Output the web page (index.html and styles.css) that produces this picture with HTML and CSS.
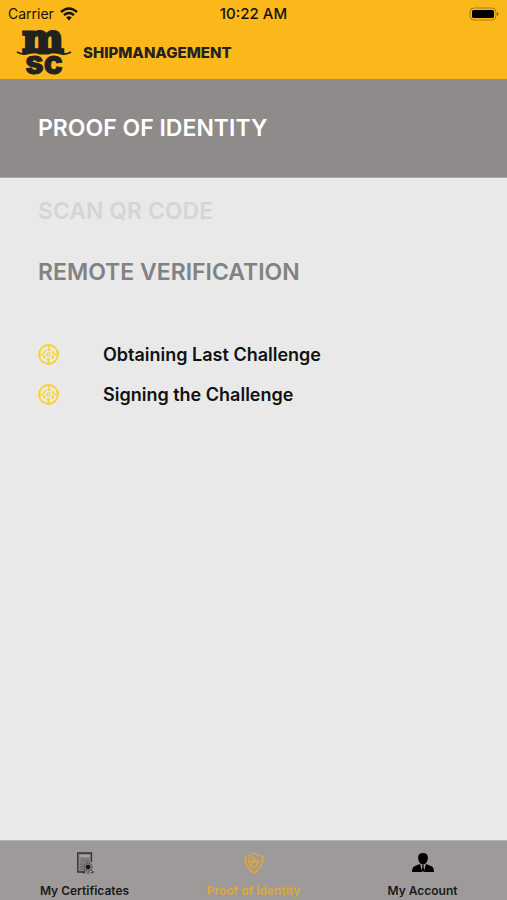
FILE: index.html
```html
<!DOCTYPE html>
<html lang="en">
<head>
<meta charset="utf-8">
<meta name="viewport" content="width=device-width, initial-scale=1">
<title>Proof of Identity</title>
<link rel="stylesheet" href="styles.css">
</head>
<body>
<header class="top">
  <div class="status">
    <div class="carrier"><span>Carrier</span>
      <svg width="18" height="14" viewBox="0 0 18 14" aria-hidden="true"><g fill="none" stroke="#15120a" stroke-width="2.4"><path d="M1 5Q9-2 17 5"/><path d="M4 8.2Q9 4 14 8.2"/></g><path d="M6.2 10.4Q9 8.2 11.8 10.4L9 13.4Z" fill="#15120a"/></svg>
    </div>
    <time class="clock">10:22 AM</time>
    <svg class="battery" width="30" height="14" viewBox="0 0 30 14" aria-hidden="true"><rect x="1" y="1" width="26" height="12" rx="4" fill="none" stroke="#a87c1a"/><rect x="3" y="3" width="22" height="8" rx="1.5" fill="#000"/><path d="M28 5q3 2 0 4z" fill="#80601a"/></svg>
  </div>
  <div class="brand">
    <svg class="logo" width="54" height="48" viewBox="0 0 54 48" role="img" aria-label="MSC">
      <g class="logo-letters" text-anchor="middle"><text class="logo-m" x="26" y="24">m</text><text class="logo-sc" x="27" y="46">sc</text></g>
      <path d="M5 27.500Q10 28 15 26.500Q20 25 27 27Q34 25 39 26.500Q44 28 49 27" fill="none" stroke="#fbb81b" stroke-width="1.500"/>
      <path d="M0 24Q5 27 10 25.500Q15 23.500 20 24.500Q24 26 27 25.500Q30 26 34 24.500Q39 23.500 44 25.500Q49 27 54 24" fill="none" stroke="#222220" stroke-width="2"/>
    </svg>
    <span class="brand-name">SHIPMANAGEMENT</span>
  </div>
</header>
<div class="banner"><h1>PROOF OF IDENTITY</h1></div>
<main>
  <h2 class="inactive">SCAN QR CODE</h2>
  <h2>REMOTE VERIFICATION</h2>
  <ul class="steps">
    <li><svg class="spinner" viewBox="0 0 22 22" aria-hidden="true"><use href="#wheel"/></svg><span>Obtaining Last Challenge</span></li>
    <li><svg class="spinner" viewBox="0 0 22 22" aria-hidden="true"><use href="#wheel"/></svg><span>Signing the Challenge</span></li>
  </ul>
</main>
<nav class="tabs">
  <a href="#certificates">
    <svg width="22" height="22" viewBox="0 0 22 22" aria-hidden="true"><path d="M17.500 10V1H3.700v19H11" fill="#858281" stroke="#333" stroke-width="1.300"/><path d="M5.500 4h10" stroke="#a8a5a4" stroke-width="2"/><path d="M7 7h8v3H7z" fill="#777"/><path d="M6 12h4M6 14.500h3M6 17h4" stroke="#666"/><circle cx="14" cy="15" r="4.200" fill="#777" stroke="#444" stroke-dasharray="1.500 1"/><circle cx="14" cy="15" r="2.200" fill="#111"/><path d="M10.500 18.500l-2 2 3 .5M14 20v2M17.500 18.500l2 1.500-3 1" fill="none" stroke="#333"/></svg>
    <span>My Certificates</span>
  </a>
  <a class="current" href="#identity" aria-current="page">
    <svg width="22" height="22" viewBox="0 0 22 22" aria-hidden="true"><g fill="none" stroke="#dfa83a"><path stroke-width="1.500" d="M11 1Q7 4 2 4.400Q2 15.500 11 21Q20 15.500 20 4.400Q15 4 11 1Z"/><path d="M11 4Q8 6 5 6.500Q5.500 14.500 11 18"/><path stroke-width="1.400" d="M8 8v7M11 5v3M14.500 8q-5-1-5 2q5-1 4.500 3q-2 3-5 1M14 10.500l3-2"/></g></svg>
    <span>Proof of Identity</span>
  </a>
  <a href="#account">
    <svg width="22" height="22" viewBox="0 0 22 22" aria-hidden="true"><path d="M11 1c-3.500 0-5 2.200-4.800 5.200C6.400 9.500 8.500 12.500 11 12.500s4.600-3 4.800-6.300C16 3.200 14.500 1 11 1Z"/><path d="M0 20q0-5 3-6l5-2 2.200 8Zm22 0q0-5-3-6l-5-2-2.200 8Z"/><path d="M10 13h2l-.5 1.500.8 4L11 20l-1.300-1.500.8-4Z"/></svg>
    <span>My Account</span>
  </a>
</nav>
<svg width="0" height="0" class="symbols" aria-hidden="true"><defs><g id="wheel" fill="none" stroke="#fad02c"><circle cx="11" cy="11" r="9.900" stroke-width="2"/><path stroke-width="1.600" d="M11 1v4M11 17V21M1 11h4M17 11H21"/><circle cx="11" cy="11" r="5.200" stroke-width="2" stroke-dasharray="3.400 2.045" stroke-dashoffset="-1"/><circle cx="11" cy="11" r="1.700" stroke-width="1.200"/></g></defs></svg>
</body>
</html>
```
FILE: styles.css
```css
* { box-sizing: border-box; }
body {
  margin: 0;
  min-height: 100vh;
  display: flex;
  flex-direction: column;
  background: #e9e9e9;
  color: #111;
  font-family: Inter, "Liberation Sans", sans-serif;
}
.top {
  background: #fbb81b;
  border-bottom: 1px solid #b48a3c;
  min-height: 80px;
}
.status {
  display: grid;
  grid-template-columns: 1fr auto 1fr;
  align-items: center;
  height: 27px;
  padding: 0 8px;
  font-size: 14px;
  color: #15120a;
}
.carrier { display: flex; align-items: center; gap: 6px; }
.clock { font-size: 15px; font-weight: 500; }
.battery { justify-self: end; }
.brand {
  display: flex;
  align-items: center;
  gap: 12px;
  padding: 1px 0 0 17px;
}
.logo { display: block; overflow: visible; }
.logo-letters { fill: #222220; stroke: #222220; font-weight: 700; }
.logo-m { font-family: "DejaVu Serif", serif; font-size: 39px; stroke-width: 3px; }
.logo-sc { font-family: Inter, sans-serif; font-size: 32px; font-weight: 800; stroke-width: 1px; }
.brand-name { font-size: 15px; font-weight: 800; color: #222220; }
.banner {
  background: #8f8b8a;
  padding: 32px 38px;
  border-bottom: 1px solid #aaa7a6;
}
h1, h2 {
  margin: 0;
  font-size: 23px;
  line-height: 33px;
  font-weight: 600;
}
h1 { color: #fff; }
h2 { color: #828282; }
main { flex: 1; padding: 17px 38px; }
h2.inactive { color: #d5d5d5; margin-bottom: 28px; }
.steps {
  list-style: none;
  margin: 45px 0 0;
  padding: 0;
}
.steps li {
  display: flex;
  align-items: center;
  gap: 44px;
  height: 40px;
  font-size: 18px;
  font-weight: 600;
}
.spinner { width: 21px; height: 21px; }
.tabs {
  display: grid;
  grid-template-columns: repeat(3, 1fr);
  height: 60px;
  background: #9e9a99;
  border-top: 1px solid #b5b2b1;
}
.tabs a {
  display: flex;
  flex-direction: column;
  align-items: center;
  gap: 9px;
  padding-top: 11px;
  color: #1b1a1a;
  text-decoration: none;
  font-size: 12px;
  line-height: 16px;
  font-weight: 600;
}
.tabs a.current { color: #dfa83a; }
.symbols { position: absolute; }
```
